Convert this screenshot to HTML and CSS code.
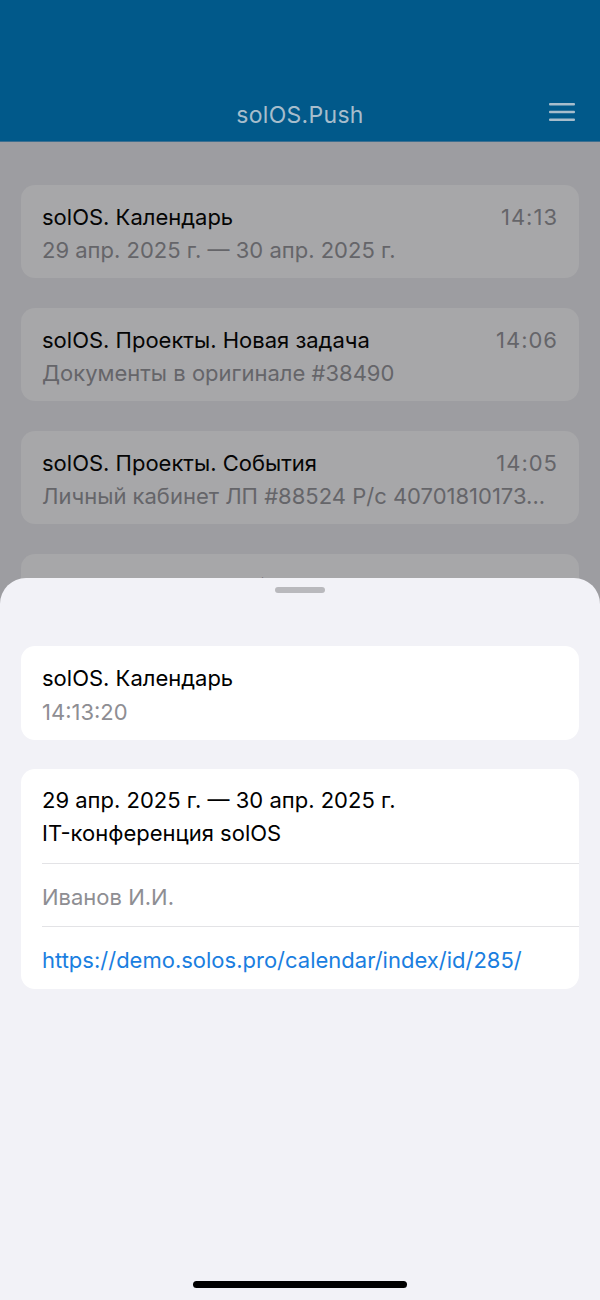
FILE: index.html
```html
<!DOCTYPE html>
<html lang="ru">
<head>
<meta charset="utf-8">
<link rel="stylesheet" href="styles.css">
</head>
<body>
<div class="screen">
  <header class="topbar">
    <div class="topbar-title">solOS.Push</div>
    <svg class="menu" width="26" height="18" viewBox="0 0 26 18">
      <rect x="0" y="0" width="26" height="2.6" rx="1" fill="#a7bdcc"/>
      <rect x="0" y="7.7" width="26" height="2.6" rx="1" fill="#a7bdcc"/>
      <rect x="0" y="15.4" width="26" height="2.6" rx="1" fill="#a7bdcc"/>
    </svg>
  </header>
  <main class="list">
    <div class="item">
      <div class="item-row"><span class="item-title">solOS. Календарь</span><span class="item-time">14:13</span></div>
      <div class="item-sub">29 апр. 2025 г. — 30 апр. 2025 г.</div>
    </div>
    <div class="item">
      <div class="item-row"><span class="item-title">solOS. Проекты. Новая задача</span><span class="item-time">14:06</span></div>
      <div class="item-sub">Документы в оригинале #38490</div>
    </div>
    <div class="item">
      <div class="item-row"><span class="item-title">solOS. Проекты. События</span><span class="item-time">14:05</span></div>
      <div class="item-sub">Личный кабинет ЛП #88524 Р/с 40701810173...</div>
    </div>
    <div class="item">
      <div class="item-row"><span class="item-title">solOS. Проекты. События</span><span class="item-time">14:04</span></div>
      <div class="item-sub">Личный кабинет ЛП #88524</div>
    </div>
  </main>

  <section class="sheet">
    <div class="handle"></div>
    <div class="card head-card">
      <div class="head-title">solOS. Календарь</div>
      <div class="head-time">14:13:20</div>
    </div>
    <div class="card detail-card">
      <div class="block">
        <div class="line">29 апр. 2025 г. — 30 апр. 2025 г.</div>
        <div class="line">IT-конференция solOS</div>
      </div>
      <div class="block sep">
        <div class="line gray">Иванов И.И.</div>
      </div>
      <div class="block sep">
        <div class="line link">https://demo.solos.pro/calendar/index/id/285/</div>
      </div>
    </div>
    <div class="home-indicator"></div>
  </section>
</div>
</body>
</html>
```

FILE: styles.css
```css
* { box-sizing: border-box; }
html, body { margin: 0; padding: 0; }
body {
  font-family: Inter, "Noto Sans", "Liberation Sans", sans-serif;
  background: #9d9da1;
  width: 600px;
  height: 1300px;
  overflow: hidden;
}
.screen {
  position: relative;
  width: 600px;
  height: 1300px;
  background: #9d9da1;
  overflow: hidden;
}
.topbar {
  height: 142px;
  background: #01598a;
  border-bottom: 1px solid #3d6f90;
  position: relative;
  display: flex;
  align-items: flex-end;
  justify-content: center;
  padding-bottom: 12px;
}
.topbar-title {
  color: #a7bdcc;
  font-size: 23px;
  font-weight: 400;
  letter-spacing: 0.3px;
}
.menu {
  position: absolute;
  right: 25px;
  bottom: 20px;
}
.list {
  padding: 43px 21px 0;
  display: flex;
  flex-direction: column;
  gap: 30px;
}
.item {
  background: #a7a7a9;
  border-radius: 14px;
  height: 93px;
  padding: 19px 21px 0 21px;
}
.item-row {
  display: flex;
  justify-content: space-between;
  align-items: baseline;
}
.item-title {
  color: #050505;
  font-size: 22px;
  font-weight: 400;
}
.item-time {
  color: #656569;
  font-size: 22px;
  letter-spacing: 1px;
}
.item-sub {
  color: #656569;
  font-size: 22px;
  margin-top: 7px;
  white-space: nowrap;
}
.sheet {
  position: absolute;
  left: 0;
  right: 0;
  top: 578px;
  bottom: 0;
  background: #f2f2f7;
  border-radius: 26px 26px 0 0;
  padding: 0 21px;
}
.handle {
  width: 50px;
  height: 6px;
  border-radius: 3px;
  background: #b9b9bd;
  margin: 9px auto 0;
}
.card {
  background: #ffffff;
  border-radius: 14px;
}
.head-card {
  margin-top: 53px;
  height: 94px;
  padding: 19px 21px 0;
}
.head-title {
  font-size: 22px;
  font-weight: 400;
  color: #000;
}
.head-time {
  font-size: 22px;
  color: #8e8e93;
  margin-top: 8px;
}
.detail-card {
  margin-top: 29px;
  padding-left: 21px;
}
.block {
  padding: 18px 21px 17px 0;
  display: flex;
  flex-direction: column;
  gap: 7px;
}
.block.sep {
  border-top: 1px solid #e3e3e6;
  padding-top: 20px;
  padding-bottom: 16px;
}
.line {
  font-size: 22px;
  color: #000;
  white-space: nowrap;
}
.line.gray { color: #8e8e93; }
.line.link { color: #1a7ee0; }
.home-indicator {
  position: absolute;
  left: 193px;
  width: 214px;
  bottom: 12px;
  height: 7px;
  border-radius: 4px;
  background: #000;
}
```
